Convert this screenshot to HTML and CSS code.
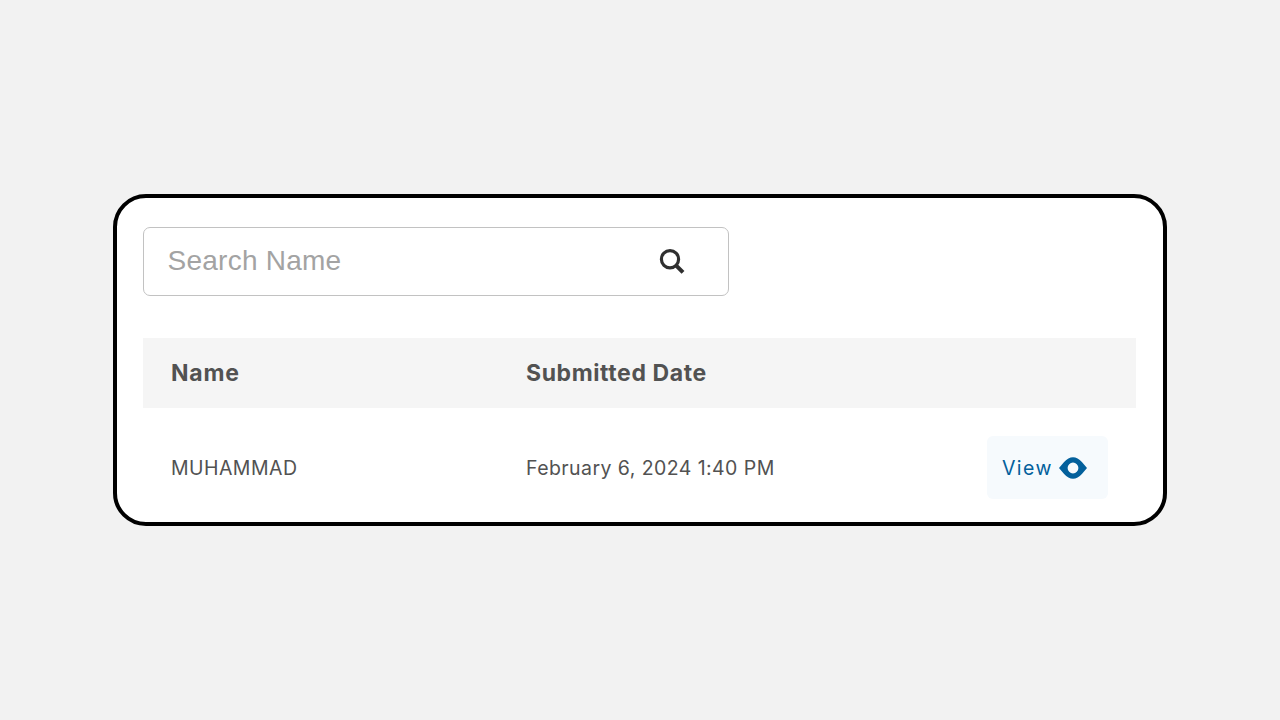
FILE: index.html
```
<!DOCTYPE html>
<html lang="en">
<head>
<meta charset="utf-8">
<title>Submissions</title>
<link rel="stylesheet" href="styles.css">
</head>
<body>
<main class="card">
  <div class="search">
    <input class="search-input" type="text" placeholder="Search Name" aria-label="Search Name">
    <svg class="search-icon" viewBox="0 0 26 26" aria-hidden="true">
      <circle cx="11" cy="10.3" r="8.6"/>
      <path class="handle" d="M17 16.3L24 23.3"/>
    </svg>
  </div>
  <div class="row head">
    <span><span class="head-name">Name</span></span>
    <span><span class="head-date">Submitted Date</span></span>
  </div>
  <div class="row">
    <span class="name">MUHAMMAD</span>
    <span class="date">February 6, 2024 1:40 PM</span>
    <a class="view"><span>View</span>
      <svg class="eye" viewBox="0 0 28 22" aria-hidden="true">
        <path fill-rule="evenodd" d="M0 11L5.1 5Q9.3 0.3 14 0.3T22.9 5L28 11L22.9 17Q18.7 21.7 14 21.7T5.1 17ZM14 5.6a5.4 5.4 0 1 0 0 10.8a5.4 5.4 0 1 0 0-10.8Z"/>
      </svg>
    </a>
  </div>
</main>
</body>
</html>
```
FILE: styles.css
```
* { box-sizing: border-box; }
body {
  margin: 0;
  height: 720px;
  display: flex;
  align-items: center;
  justify-content: center;
  background: #f2f2f2;
  font-family: Inter, Roboto, sans-serif;
  color: #525252;
}
.card {
  width: 1054px;
  height: 332px;
  padding: 29px 27px 0 26px;
  border: 4px solid #000;
  border-radius: 33px;
  background: #fff;
}
.search {
  width: 586px;
  height: 69px;
  margin-bottom: 42px;
  padding: 0 43px 0 23.5px;
  display: flex;
  align-items: center;
  border: 1px solid #c2c2c2;
  border-radius: 7px;
}
.search-input {
  flex: 1;
  min-width: 0;
  padding: 0 0 2px;
  border: 0;
  outline: 0;
  background: none;
  font: 28px "Liberation Sans", Arial, sans-serif;
  letter-spacing: 0.25px;
}
.search-input::placeholder { color: #a3a3a3; opacity: 1; }
.search-icon {
  width: 26px;
  height: 26px;
  fill: none;
  stroke: #2f2f2f;
  stroke-width: 3.2;
}
.handle { stroke-width: 4; }
.row {
  height: 119px;
  padding: 0 28px;
  display: grid;
  grid-template-columns: 355px 1fr auto;
  align-items: center;
  font-size: 19.5px;
}
.head {
  height: 70px;
  background: #f5f5f5;
  font-size: 23px;
  font-weight: 700;
}
.head-name { letter-spacing: 0.8px; }
.head-date { letter-spacing: 0.6px; }
.name { letter-spacing: 0.45px; }
.date { letter-spacing: 0.43px; }
.view {
  width: 121px;
  height: 63px;
  padding-left: 15px;
  display: flex;
  align-items: center;
  justify-content: space-between;
  padding-right: 21px;
  border-radius: 6px;
  background: #f6fafd;
  color: #03609c;
  letter-spacing: 1.4px;
}
.eye { width: 28px; height: 22px; fill: #03609c; }
```
